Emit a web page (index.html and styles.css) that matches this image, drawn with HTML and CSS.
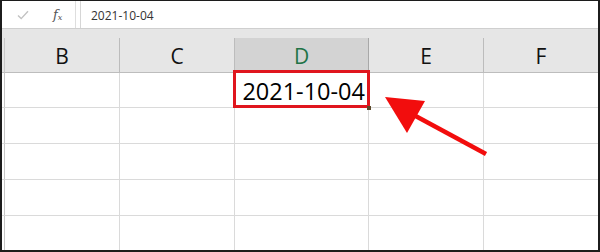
FILE: index.html
```html
<!DOCTYPE html>
<html lang="en">
<head>
<meta charset="utf-8">
<title>Excel date</title>
<link rel="stylesheet" href="styles.css">
</head>
<body>
<div class="stage">
  <div class="window">
    <div class="formula-bar">
      <div class="fx-tools">
        <svg class="check" width="12" height="10" viewBox="0 0 12 10"><path d="M1 5.5 L4.2 8.6 L11 1.2" fill="none" stroke="#c2c2c2" stroke-width="1.4"/></svg>
        <span class="fx">f<sub>x</sub></span>
      </div>
      <div class="formula-input">2021-10-04</div>
    </div>
    <div class="strip"></div>
    <div class="sheet">
      <div class="hd corner"></div>
      <div class="hd">B</div>
      <div class="hd">C</div>
      <div class="hd active">D</div>
      <div class="hd">E</div>
      <div class="hd last">F</div>

      <div class="c a"></div><div class="c"></div><div class="c"></div><div class="c sel">2021-10-04</div><div class="c"></div><div class="c last"></div>
      <div class="c a"></div><div class="c"></div><div class="c"></div><div class="c"></div><div class="c"></div><div class="c last"></div>
      <div class="c a"></div><div class="c"></div><div class="c"></div><div class="c"></div><div class="c"></div><div class="c last"></div>
      <div class="c a"></div><div class="c"></div><div class="c"></div><div class="c"></div><div class="c"></div><div class="c last"></div>
      <div class="c a end"></div><div class="c end"></div><div class="c end"></div><div class="c end"></div><div class="c end"></div><div class="c last end"></div>
    </div>
  </div>
  <svg class="arrow" width="600" height="252" viewBox="0 0 600 252">
    <line x1="410" y1="113" x2="486" y2="154" stroke="#f20d0d" stroke-width="4.5"/>
    <polygon points="385,97 425,101 407,133" fill="#f20d0d"/>
  </svg>
</div>
</body>
</html>
```

FILE: styles.css
```css
* { box-sizing: border-box; }
html, body { margin: 0; padding: 0; background: #fff; }
.stage { position: relative; width: 600px; height: 252px; overflow: hidden; }
.window {
  width: 600px; height: 252px;
  border-style: solid; border-color: #1c1c1c;
  border-width: 1px 2px 2px 2px;
  display: flex; flex-direction: column;
  font-family: "Open Sans", "Liberation Sans", sans-serif;
}
.formula-bar {
  height: 28px; flex: none;
  display: flex; background: #fff;
  border-bottom: 1px solid #cfcfcf;
}
.fx-tools {
  width: 74px; flex: none;
  display: flex; align-items: center;
  border-right: 1px solid #dedede;
  padding-left: 15px;
}
.check { margin-top: 1px; }
.fx {
  margin-left: 24px;
  font-family: "DejaVu Serif", "Liberation Serif", serif;
  font-style: italic; font-size: 13px; color: #555;
}
.fx sub { font-size: 8px; vertical-align: -1px; }
.formula-input {
  flex: 1; margin-left: 4px;
  border-left: 1px solid #d6d6d6;
  padding-left: 10px;
  font-size: 12px; color: #333;
  display: flex; align-items: center;
  padding-top: 1px;
}
.strip { height: 9px; flex: none; background: #e6e6e6; }
.sheet {
  flex: 1;
  display: grid;
  grid-template-columns: 3px 115px 115px 134px 115px 1fr;
  grid-template-rows: 35px 35px 36px 36px 36px 1fr;
}
.hd {
  background: #e6e6e6;
  border-right: 1px solid #bcbcbc;
  border-bottom: 1px solid #bdbdbd;
  display: flex; align-items: center; justify-content: center;
  font-size: 21px; color: #111;
  padding-top: 2px;
}
.hd.corner { border-right: 1px solid #c8c8c8; }
.hd.active { background: #d3d3d3; color: #217346; border-right-color: #a8a8a8; }
.hd.last { border-right: none; }
.c {
  border-right: 1px solid #dadada;
  border-bottom: 1px solid #dadada;
  background: #fff;
}
.c.a { border-right-color: #c6c6c6; }
.c.last { border-right: none; }
.c.end { border-bottom: none; }
.sel {
  position: relative;
  display: flex; align-items: center; justify-content: flex-end;
  padding-right: 3px; padding-top: 1px;
  font-size: 23.5px; color: #000;
}
.sel::after {
  content: "";
  position: absolute;
  top: -3px; left: -2px; right: -2px; bottom: -1px;
  border: 3px solid #e0161e;
}
.sel::before {
  content: "";
  position: absolute;
  right: -3px; bottom: -3px;
  width: 4px; height: 4px;
  background: #5b4a2c;
  z-index: 2;
}
.arrow { position: absolute; left: 0; top: 0; pointer-events: none; }
```
